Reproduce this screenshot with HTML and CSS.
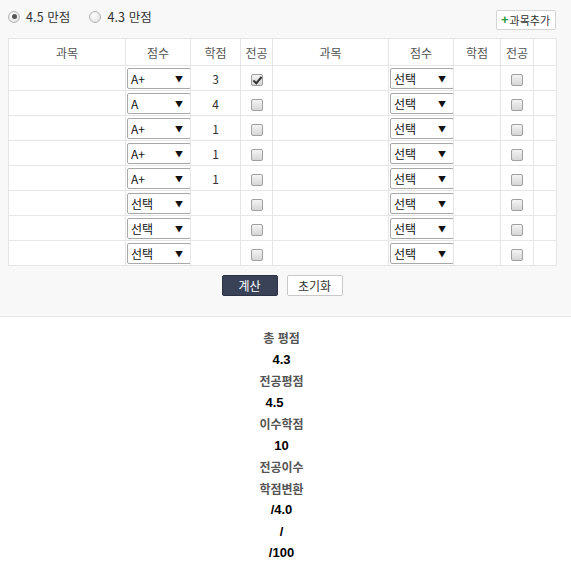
FILE: index.html
```html
<!DOCTYPE html>
<html lang="ko">
<head>
<meta charset="utf-8">
<link rel="stylesheet" href="styles.css">
</head>
<body>
<div class="calc">
  <div class="topbar">
    <div class="scales">
      <label class="opt"><span class="radio on"></span>4.5 만점</label>
      <label class="opt"><span class="radio"></span>4.3 만점</label>
    </div>
    <button class="add"><span class="plus">+</span>과목추가</button>
  </div>
  <table class="grid">
    <colgroup>
      <col class="c-name"><col class="c-grade"><col class="c-cred"><col class="c-major">
      <col class="c-name2"><col class="c-grade"><col class="c-cred2"><col class="c-major2"><col class="c-rest">
    </colgroup>
    <thead>
      <tr><th>과목</th><th>점수</th><th>학점</th><th>전공</th><th>과목</th><th>점수</th><th>학점</th><th>전공</th><th></th></tr>
    </thead>
    <tbody>
      <tr><td></td><td><span class="sel">A+<i>▼</i></span></td><td>3</td><td><span class="chk on"></span></td><td></td><td><span class="sel">선택<i>▼</i></span></td><td></td><td><span class="chk"></span></td><td></td></tr>
      <tr><td></td><td><span class="sel">A<i>▼</i></span></td><td>4</td><td><span class="chk"></span></td><td></td><td><span class="sel">선택<i>▼</i></span></td><td></td><td><span class="chk"></span></td><td></td></tr>
      <tr><td></td><td><span class="sel">A+<i>▼</i></span></td><td>1</td><td><span class="chk"></span></td><td></td><td><span class="sel">선택<i>▼</i></span></td><td></td><td><span class="chk"></span></td><td></td></tr>
      <tr><td></td><td><span class="sel">A+<i>▼</i></span></td><td>1</td><td><span class="chk"></span></td><td></td><td><span class="sel">선택<i>▼</i></span></td><td></td><td><span class="chk"></span></td><td></td></tr>
      <tr><td></td><td><span class="sel">A+<i>▼</i></span></td><td>1</td><td><span class="chk"></span></td><td></td><td><span class="sel">선택<i>▼</i></span></td><td></td><td><span class="chk"></span></td><td></td></tr>
      <tr><td></td><td><span class="sel">선택<i>▼</i></span></td><td></td><td><span class="chk"></span></td><td></td><td><span class="sel">선택<i>▼</i></span></td><td></td><td><span class="chk"></span></td><td></td></tr>
      <tr><td></td><td><span class="sel">선택<i>▼</i></span></td><td></td><td><span class="chk"></span></td><td></td><td><span class="sel">선택<i>▼</i></span></td><td></td><td><span class="chk"></span></td><td></td></tr>
      <tr><td></td><td><span class="sel">선택<i>▼</i></span></td><td></td><td><span class="chk"></span></td><td></td><td><span class="sel">선택<i>▼</i></span></td><td></td><td><span class="chk"></span></td><td></td></tr>
    </tbody>
  </table>
  <div class="actions">
    <button class="btn primary">계산</button>
    <button class="btn">초기화</button>
  </div>
</div>
<div class="results">
  <div class="label">총 평점</div>
  <div class="value">4.3</div>
  <div class="label">전공평점</div>
  <div class="value shift">4.5</div>
  <div class="label">이수학점</div>
  <div class="value">10</div>
  <div class="label">전공이수</div>
  <div class="label">학점변환</div>
  <div class="value">/4.0</div>
  <div class="value">/</div>
  <div class="value">/100</div>
</div>
</body>
</html>
```
FILE: styles.css
```css
html, body {
  margin: 0;
  padding: 0;
  background: #fff;
}
body {
  font-family: "Noto Sans CJK KR", "Liberation Sans", sans-serif;
  font-size: 12px;
  color: #333;
}
.calc {
  background: #f8f8f8;
  border-bottom: 1px solid #e6e6e6;
  padding: 0 15px 20px 8px;
}
.topbar {
  display: flex;
  justify-content: space-between;
  align-items: center;
  height: 38px;
}
.scales {
  display: flex;
  gap: 19px;
  margin-top: -5px;
}
.opt {
  display: flex;
  align-items: center;
  gap: 6px;
  font-size: 12.5px;
  color: #333;
  letter-spacing: 0.1px;
}
.radio {
  width: 12px;
  height: 12px;
  border-radius: 50%;
  border: 1px solid #b5b5b5;
  background: radial-gradient(circle at 40% 35%, #fff, #dcdcdc);
  box-sizing: border-box;
  position: relative;
}
.radio.on::after {
  content: "";
  position: absolute;
  left: 2.5px;
  top: 2.5px;
  width: 5px;
  height: 5px;
  border-radius: 50%;
  background: #555;
}
.add {
  font-family: inherit;
  font-size: 11px;
  height: 20px;
  padding: 0 5px 0 4px;
  margin-top: 1px;
  background: #fff;
  border: 1px solid #d4d4d4;
  border-radius: 2px;
  color: #333;
  display: flex;
  align-items: center;
  gap: 1px;
}
.plus {
  color: #2e9b3a;
  font-weight: bold;
  font-size: 13px;
  font-family: "Liberation Sans", sans-serif;
}
.grid {
  border-collapse: collapse;
  table-layout: fixed;
  width: 548px;
  background: #fff;
  border: 1px solid #e2e2e2;
}
.c-name { width: 117px; }
.c-grade { width: 65px; }
.c-cred { width: 50px; }
.c-major { width: 32px; }
.c-name2 { width: 116px; }
.c-cred2 { width: 47px; }
.c-major2 { width: 33px; }
.c-rest { width: 23px; }
.grid th, .grid td {
  border: 1px solid #e6e6e6;
  padding: 0;
  text-align: center;
  vertical-align: middle;
}
.grid th {
  height: 26px;
  font-weight: normal;
  color: #555;
  font-size: 12px;
}
.grid td {
  height: 24px;
  font-size: 12px;
  color: #333;
}
.sel {
  display: flex;
  justify-content: space-between;
  align-items: center;
  box-sizing: border-box;
  width: 64px;
  height: 21px;
  margin-left: 1px;
  padding: 0 7px 0 3px;
  background: #fff;
  border: 1px solid #a8a8a8;
  border-radius: 2px;
  font-size: 12px;
  color: #111;
  text-align: left;
}
.sel i {
  font-style: normal;
  font-size: 8px;
  color: #111;
}
.chk {
  display: inline-block;
  width: 12px;
  height: 12px;
  box-sizing: border-box;
  border: 1px solid #a0a0a0;
  border-radius: 2px;
  background: linear-gradient(#f4f4f4, #d6d6d6);
  vertical-align: middle;
  position: relative;
}
.chk.on::after {
  content: "";
  position: absolute;
  left: 3px;
  top: 0px;
  width: 3px;
  height: 7px;
  border: solid #333;
  border-width: 0 2px 2px 0;
  transform: rotate(40deg);
}
.actions {
  display: flex;
  justify-content: center;
  gap: 9px;
  margin-top: 9px;
  width: 548px;
}
.btn {
  font-family: inherit;
  font-size: 12px;
  width: 56px;
  height: 21px;
  padding: 0;
  background: #fff;
  border: 1px solid #c8c8c8;
  border-radius: 2px;
  color: #333;
}
.btn.primary {
  background: #3a4258;
  border-color: #2c3244;
  color: #fff;
}
.results {
  display: flex;
  flex-direction: column;
  align-items: center;
  padding-top: 10px;
  padding-right: 8px;
}
.results div {
  line-height: 21.5px;
  font-weight: bold;
}
.label {
  color: #555;
  font-size: 12px;
}
.value {
  color: #000;
  font-size: 13px;
  font-family: "Liberation Sans", sans-serif;
}
.value.shift {
  margin-right: 14px;
}
```
